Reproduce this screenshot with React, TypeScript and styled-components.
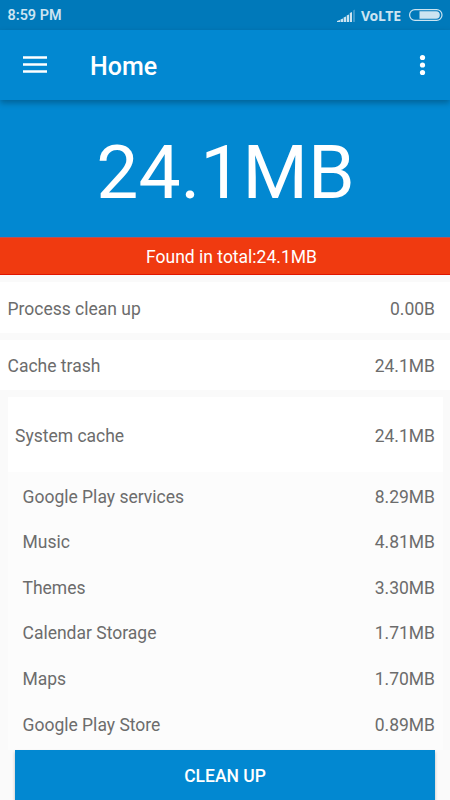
import React from "react";
import styled, { createGlobalStyle } from "styled-components";

const GlobalStyle = createGlobalStyle`
  * { box-sizing: border-box; }
  body { margin: 0; background: #fafafa; }
`;

const Screen = styled.div`
  width: 450px;
  height: 800px;
  overflow: hidden;
  display: flex;
  flex-direction: column;
  background: #fafafa;
  color: #6c6c6c;
  font-family: Roboto, "Liberation Sans", sans-serif;
  font-size: 17.5px;
`;

const StatusBar = styled.div`
  flex: none;
  height: 30px;
  padding: 0 7px 0 7.5px;
  display: flex;
  align-items: center;
  justify-content: space-between;
  background: #0079ba;
  color: #cce4f1;
`;

const Clock = styled.span`
  font-size: 14.4px;
  font-weight: 600;
  line-height: 30px;
  padding-top: 2px;
`;

const StatusIcons = styled.div`
  display: flex;
  align-items: center;
`;

const Network = styled.span`
  font-family: "Noto Sans", "Open Sans", sans-serif;
  font-size: 14px;
  font-weight: 700;
  letter-spacing: -0.25px;
  line-height: 30px;
  width: 42px;
  margin: 0 6px 0 5px;
  padding-top: 1px;
  white-space: nowrap;
`;

const AppBar = styled.header`
  flex: none;
  height: 70px;
  padding: 0 20px;
  display: flex;
  align-items: center;
  background: #0288d1;
  color: #fff;
  position: relative;
  box-shadow: 0 3px 6px rgba(0, 0, 0, 0.28);
`;

const IconButton = styled.button`
  display: flex;
  padding: 0;
  border: 0;
  background: none;
  color: inherit;
`;

const Title = styled.h1`
  flex: 1;
  margin: 3px 0 0 40px;
  font-size: 25px;
  font-weight: 500;
  line-height: 30px;
`;

const Hero = styled.div`
  flex: none;
  height: 137px;
  padding: 7px 0 0 1px;
  display: flex;
  align-items: center;
  justify-content: center;
  background: #0288d1;
  color: #fff;
  font-size: 75px;
`;

const Banner = styled.div`
  flex: none;
  height: 38px;
  padding: 2px 0 0 13px;
  display: flex;
  align-items: center;
  justify-content: center;
  background: #f03a10;
  border-top: 1px solid #b6505a;
  border-bottom: 1px solid #e01500;
  color: #fff;
`;

const Groups = styled.main`
  flex: 1;
  min-height: 0;
  display: flex;
  flex-direction: column;
  gap: 7px;
  padding-top: 7px;
`;

const Row = styled.div<{ $height: number; $left: number; $right: number }>`
  flex: none;
  height: ${(p) => p.$height}px;
  padding: 2px ${(p) => p.$right}px 0 ${(p) => p.$left}px;
  display: flex;
  align-items: center;
  justify-content: space-between;
`;

const GroupRow = styled(Row)`
  background: #fff;
`;

const Card = styled.section`
  flex: 1;
  min-height: 0;
  overflow: hidden;
  margin: 0 7.5px;
  background: #fcfcfc;
`;

const Items = styled.div`
  padding-top: 0.8px;
`;

const Footer = styled.footer`
  flex: none;
  height: 50px;
  padding: 0 15px;
  display: flex;
`;

const CleanButton = styled.button`
  flex: 1;
  border: 0;
  padding: 2px 0 0;
  background: #0288d1;
  color: #fff;
  font: 500 17.5px Roboto, "Liberation Sans", sans-serif;
  box-shadow: 0 2px 3px rgba(0, 0, 0, 0.25);
`;

const groups = [
  { name: "Process clean up", size: "0.00B", height: 51 },
  { name: "Cache trash", size: "24.1MB", height: 50 },
];

const items = [
  { name: "Google Play services", size: "8.29MB" },
  { name: "Music", size: "4.81MB" },
  { name: "Themes", size: "3.30MB" },
  { name: "Calendar Storage", size: "1.71MB" },
  { name: "Maps", size: "1.70MB" },
  { name: "Google Play Store", size: "0.89MB" },
];

const SignalIcon = () => (
  <svg width="19" height="14" viewBox="0 0 19 14" fill="#cce4f1">
    <path d="M0 14v-1l3-1v2zM3.5 11.5l2.500-1V14H3.500zM6.600 9.500l2.400-1V14H6.600zM9.700 7.500l2.300-1V14H9.700zM12.800 5l2.200-1v10h-2.200z" />
    <path d="M16 2.500l2-1V14h-2z" opacity=".3" />
  </svg>
);

const BatteryIcon = () => (
  <svg width="34" height="12" viewBox="0 0 34 12">
    <rect x=".6" y=".6" width="32.4" height="10.8" rx="5.4" fill="none" stroke="#cce4f1" strokeWidth="1.2" />
    <path d="M10.500 2.200h16.500a3.800 3.800 0 0 1 0 7.600H10.500z" fill="#cce4f1" />
  </svg>
);

const MenuIcon = () => (
  <svg width="30" height="30" viewBox="0 0 30 30" fill="#fff">
    <path d="M3 6.200h24v2.500H3zM3 13.200h24v2.500H3zM3 20.200h24v2.500H3z" />
  </svg>
);

const MoreIcon = () => (
  <svg width="15" height="30" viewBox="0 0 15 30" fill="#fff">
    <circle cx="7.5" cy="7.5" r="2.6" />
    <circle cx="7.5" cy="15" r="2.6" />
    <circle cx="7.5" cy="22.5" r="2.6" />
  </svg>
);

export default function App() {
  return (
    <>
      <GlobalStyle />
      <Screen>
        <StatusBar>
          <Clock>8:59 PM</Clock>
          <StatusIcons>
            <SignalIcon />
            <Network>VoLTE</Network>
            <BatteryIcon />
          </StatusIcons>
        </StatusBar>
        <AppBar>
          <IconButton aria-label="Menu">
            <MenuIcon />
          </IconButton>
          <Title>Home</Title>
          <IconButton aria-label="More options">
            <MoreIcon />
          </IconButton>
        </AppBar>
        <Hero>24.1MB</Hero>
        <Banner>Found in total:24.1MB</Banner>
        <Groups>
          {groups.map((g) => (
            <GroupRow key={g.name} $height={g.height} $left={7.5} $right={15}>
              <span>{g.name}</span>
              <span>{g.size}</span>
            </GroupRow>
          ))}
          <Card>
            <GroupRow $height={75} $left={7.5} $right={7.5}>
              <span>System cache</span>
              <span>24.1MB</span>
            </GroupRow>
            <Items>
              {items.map((item) => (
                <Row key={item.name} $height={45.6} $left={15} $right={7.5}>
                  <span>{item.name}</span>
                  <span>{item.size}</span>
                </Row>
              ))}
            </Items>
          </Card>
        </Groups>
        <Footer>
          <CleanButton>CLEAN UP</CleanButton>
        </Footer>
      </Screen>
    </>
  );
}
